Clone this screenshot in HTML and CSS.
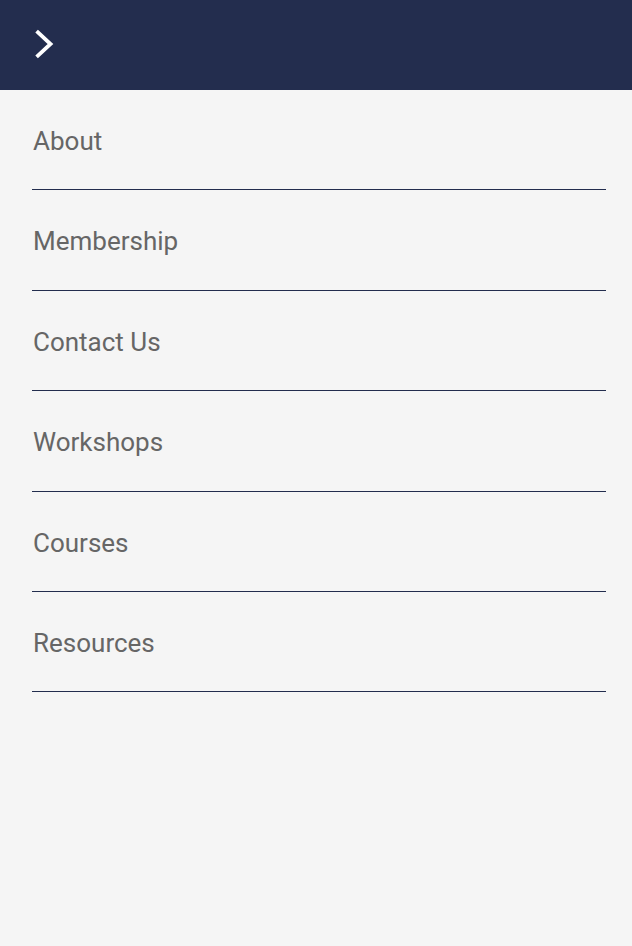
FILE: index.html
```html
<!DOCTYPE html>
<html lang="en">
<head>
<meta charset="utf-8">
<title>Menu</title>
<link rel="stylesheet" href="styles.css">
</head>
<body>
<header class="topbar">
  <button class="toggle" aria-label="Close menu">
    <svg width="24" height="34" viewBox="0 0 24 34" aria-hidden="true">
      <path d="M4 5.5 L16.5 17 L4 28.5" fill="none" stroke="#ffffff" stroke-width="3.8" stroke-linecap="square" stroke-linejoin="miter"/>
    </svg>
  </button>
</header>
<nav class="menu">
  <a class="item" href="#">About</a>
  <a class="item" href="#">Membership</a>
  <a class="item" href="#">Contact Us</a>
  <a class="item" href="#">Workshops</a>
  <a class="item" href="#">Courses</a>
  <a class="item" href="#">Resources</a>
</nav>
</body>
</html>
```
FILE: styles.css
```css
html, body {
  margin: 0;
  padding: 0;
  background: #f5f5f5;
  font-family: Roboto, "Liberation Sans", sans-serif;
}
.topbar {
  height: 90px;
  background: #232d4e;
  display: flex;
  align-items: flex-start;
}
.toggle {
  margin: 27px 0 0 34px;
  padding: 0;
  border: 0;
  background: none;
  width: 24px;
  height: 34px;
  display: flex;
}
.menu {
  display: flex;
  flex-direction: column;
  margin: 0 26px 0 32px;
}
.item {
  display: block;
  font-size: 26px;
  line-height: 30px;
  color: #666666;
  text-decoration: none;
  padding: 36px 0 33.4px 1px;
  border-bottom: 1px solid #232d4e;
}
```
